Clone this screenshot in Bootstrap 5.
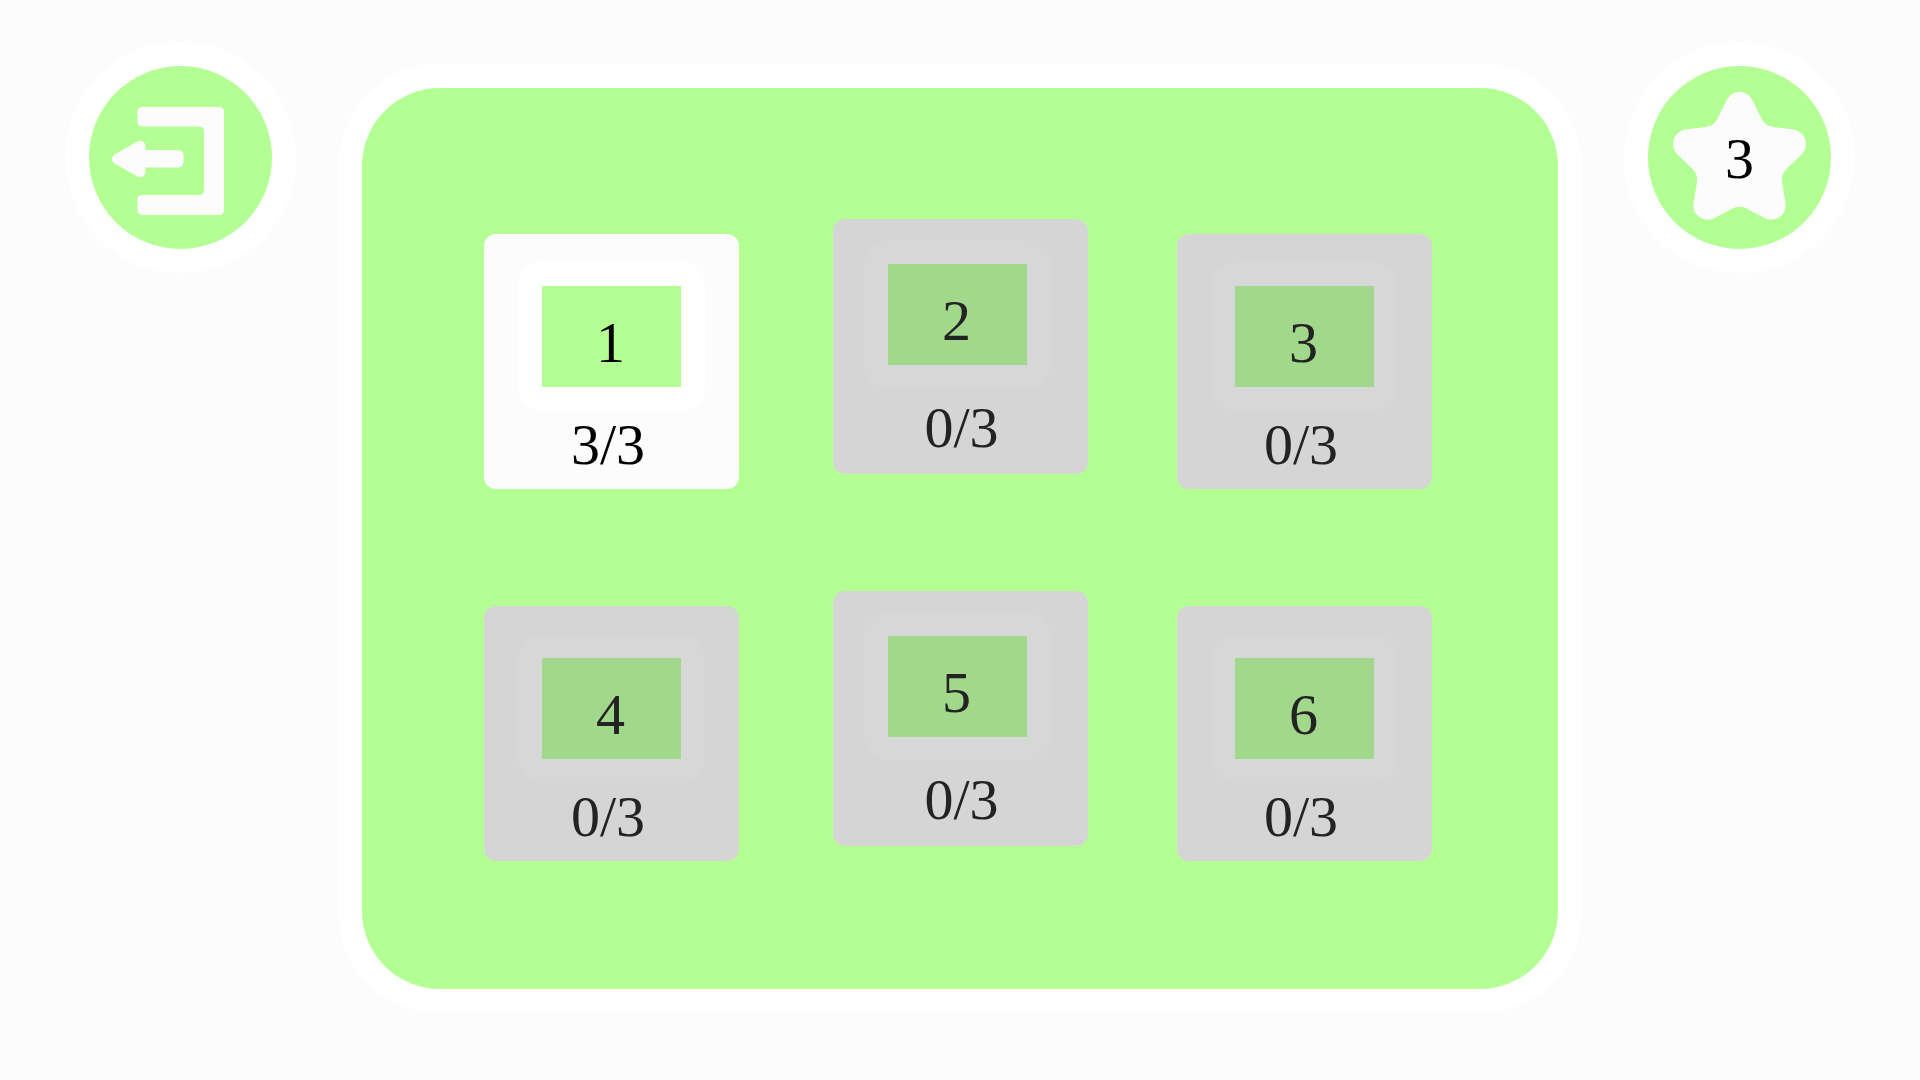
<!DOCTYPE html>
<html lang="en">
<head>
<meta charset="utf-8">
<meta name="viewport" content="width=device-width, initial-scale=1">
<title>Levels</title>
<link href="https://cdn.jsdelivr.net/npm/bootstrap@5.3.0/dist/css/bootstrap.min.css" rel="stylesheet">
<style>
  body { background: #fcfcfc; color: #000; font-family: "Liberation Serif", "Times New Roman", serif; font-size: 58px; line-height: 64px; }
  .screen { padding: 42px 65px 0; }
  .round { width: 231px; height: 231px; border: 24px solid #fff; background: #b3ff94; color: #000; }
  .round svg { width: 183px; height: 183px; }
  .round-label { padding-top: 2px; }
  .board { margin: 22px 42px 0; padding: 131px 126px 128px 122px; gap: 102px; border: 24px solid #fff; border-radius: 102px; background: #b3ff94; }
  .level { width: 255px; height: 255px; border-radius: 12px; background: #fcfcfc; color: #000; padding: 28px 0 0; }
  .level-mid { margin: 0 0 15px 5px; padding: 21px 6px 0 0; }
  .level:disabled { background: #d5d5d5; color: #232323; opacity: 1; }
  .tile { width: 187px; height: 149px; padding: 25px 2px 0 0; border: 24px solid #fff; border-radius: 24px; background: #b3ff94; background-clip: padding-box; }
  .level:disabled .tile { border-color: #d7d7d7; background-color: #a2d88b; }
  .score { margin-top: 2px; padding-right: 7px; }
  .level-mid .score { margin-top: 7px; padding: 0 0 0 8px; }
</style>
<script src="https://cdn.jsdelivr.net/npm/bootstrap@5.3.0/dist/js/bootstrap.bundle.min.js"></script>
</head>
<body>
<div class="screen d-flex align-items-start">
  <button type="button" class="round rounded-circle p-0 flex-shrink-0 d-flex" aria-label="Exit">
    <svg viewBox="0 0 183 183" fill="#fcfcfc" aria-hidden="true">
      <path d="M53 41H130.500a4.500 4.500 0 0 1 4.500 4.500V144.500a4.500 4.500 0 0 1-4.500 4.500H53a4.500 4.500 0 0 1-4.500-4.500V133.500a4.500 4.500 0 0 1 4.500-4.500H110.500a4.500 4.500 0 0 0 4.500-4.500V65a4.500 4.500 0 0 0-4.500-4.500H53a4.500 4.500 0 0 1-4.500-4.500V45.500a4.500 4.500 0 0 1 4.500-4.500z"/>
      <path d="M48 75.800C52 73.500 56.500 76 56.500 80V84H89a5.500 5.500 0 0 1 5.500 5.500V96a5.500 5.500 0 0 1-5.500 5.500H56.500V105.500C56.500 110 52 112.500 48 110.200L26 97.800C22.200 95.500 22.200 90.500 26 88.200z"/>
    </svg>
  </button>

  <main class="board flex-grow-1 d-flex flex-column">
    <div class="d-flex justify-content-between align-items-end">
      <button type="button" class="level border-0 d-flex flex-column align-items-center"><span class="tile">1</span><span class="score">3/3</span></button>
      <button type="button" class="level level-mid border-0 d-flex flex-column align-items-center" disabled><span class="tile">2</span><span class="score">0/3</span></button>
      <button type="button" class="level border-0 d-flex flex-column align-items-center" disabled><span class="tile">3</span><span class="score">0/3</span></button>
    </div>
    <div class="d-flex justify-content-between align-items-end">
      <button type="button" class="level border-0 d-flex flex-column align-items-center" disabled><span class="tile">4</span><span class="score">0/3</span></button>
      <button type="button" class="level level-mid border-0 d-flex flex-column align-items-center" disabled><span class="tile">5</span><span class="score">0/3</span></button>
      <button type="button" class="level border-0 d-flex flex-column align-items-center" disabled><span class="tile">6</span><span class="score">0/3</span></button>
    </div>
  </main>

  <div class="round rounded-circle flex-shrink-0 position-relative">
    <svg class="d-block" viewBox="0 0 183 183" fill="#fcfcfc" aria-hidden="true">
      <path d="M79 33.500C84.500 23.500 98.500 23.500 104 33.500L113.500 52.500C116 57.500 119.500 60 125 61L145.500 63.500C157.500 65.500 162 80 153.500 88.500L139 102.500C135 106.500 133.500 110 134 115.500L137.500 137.500C139 149.500 127 157 116.500 152L97.500 142C93.500 140 89.500 140 85.500 142L66.500 152C56 157 44 149.500 45.500 137.500L49 115.500C49.500 110 48 106.500 44 102.500L29.500 88.500C21 80 25.500 65.500 37.500 63.500L58 61C63.500 60 67 57.500 69.500 52.500z"/>
    </svg>
    <span class="round-label position-absolute top-0 start-0 w-100 h-100 d-flex align-items-center justify-content-center">3</span>
  </div>
</div>
</body>
</html>
